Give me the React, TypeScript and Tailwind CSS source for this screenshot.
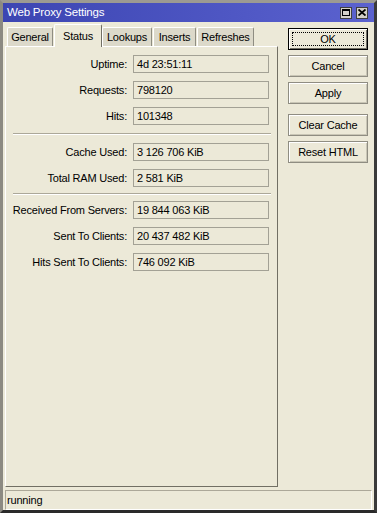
import React from 'react';

type Row = { label: string; value: string };

const groups: Row[][] = [
  [
    { label: 'Uptime:', value: '4d 23:51:11' },
    { label: 'Requests:', value: '798120' },
    { label: 'Hits:', value: '101348' },
  ],
  [
    { label: 'Cache Used:', value: '3 126 706 KiB' },
    { label: 'Total RAM Used:', value: '2 581 KiB' },
  ],
  [
    { label: 'Received From Servers:', value: '19 844 063 KiB' },
    { label: 'Sent To Clients:', value: '20 437 482 KiB' },
    { label: 'Hits Sent To Clients:', value: '746 092 KiB' },
  ],
];

function Tab({ label, className, active }: { label: string; className: string; active?: boolean }) {
  if (active) {
    return (
      <div
        className={`${className} h-[23px] flex items-start justify-center pt-[3px] bg-[#ece9d8] border-l border-t border-white border-r border-r-[#716f64] rounded-t-[2px] relative z-10`}
      >
        {label}
      </div>
    );
  }
  return (
    <div
      className={`${className} h-[19px] mb-[1px] flex items-center justify-center bg-[#dcd9ca] border-l border-t border-white border-r border-r-[#8f8d82] rounded-t-[2px]`}
    >
      {label}
    </div>
  );
}

function Button({ label, focused }: { label: string; focused?: boolean }) {
  if (focused) {
    return (
      <div className="h-[22px] w-[80px] border border-black bg-[#ece9d8] p-[3px] shadow-[inset_1px_1px_0_#fff,inset_-1px_-1px_0_#716f64]">
        <div className="h-full w-full border border-dotted border-black flex items-center justify-center">
          {label}
        </div>
      </div>
    );
  }
  return (
    <div className="h-[22px] w-[80px] border border-[#8f8d82] bg-[#ece9d8] flex items-center justify-center shadow-[inset_1px_1px_0_#fff,inset_-1px_-1px_0_#c9c6b6]">
      {label}
    </div>
  );
}

function Separator() {
  return <div className="ml-[7px] w-[258px] h-[2px] border-t border-[#aca899] border-b border-b-white" />;
}

export default function App() {
  return (
    <div className="w-[380px] h-[520px] bg-white font-['Liberation_Sans',Arial,sans-serif] text-[11px] tracking-[-0.2px] text-black">
      <div className="w-[377px] h-[513px] flex flex-col bg-[#ece9d8] border-[3px] border-l-[#8c8a82] border-t-[#9c9a92] border-r-[#3a3a3a] border-b-[#2a2a2a]">
        {/* title bar */}
        <div className="h-[19px] flex items-center pl-[4px] pr-[6px] bg-gradient-to-r from-[#3c45b2] to-[#5b62cf] text-white text-[11.5px]">
          <span className="flex-1">Web Proxy Settings</span>
          <div className="w-[12px] h-[12px] bg-[#d4d0c8] border border-[#404040] flex items-center justify-center">
            <div className="w-[8px] h-[7px] border border-black border-t-2" />
          </div>
          <div className="ml-[4px] w-[12px] h-[12px] bg-[#d4d0c8] border border-[#404040] flex items-center justify-center">
            <svg width="8" height="7" viewBox="0 0 8 7">
              <path d="M0.5 0.5 L7.5 6.5 M7.5 0.5 L0.5 6.5" stroke="black" strokeWidth="1.8" />
            </svg>
          </div>
        </div>

        <div className="flex h-[465px]">
          {/* tabs + panel */}
          <div className="ml-[2px] w-[273px] flex flex-col">
            <div className="h-[25px] flex items-end -mb-[1px]">
              <Tab label="General" className="ml-[2px] w-[46px]" />
              <Tab label="Status" className="ml-[1px] w-[48px]" active />
              <Tab label="Lookups" className="w-[50px]" />
              <Tab label="Inserts" className="ml-[1px] w-[43px]" />
              <Tab label="Refreshes" className="ml-[1px] w-[57px]" />
            </div>
            <div className="h-[441px] border-l border-t border-white border-r border-b border-r-[#716f64] border-b-[#716f64] pt-[8px] flex flex-col">
              {groups.map((group, gi) => (
                <React.Fragment key={gi}>
                  {gi === 1 && (
                    <div className="mt-[8px] mb-[8px]">
                      <Separator />
                    </div>
                  )}
                  {gi === 2 && (
                    <div className="mt-[6px] mb-[6px]">
                      <Separator />
                    </div>
                  )}
                  <div className="flex flex-col gap-[8px]">
                    {group.map((row) => (
                      <div key={row.label} className="flex items-center h-[18px]">
                        <div className="w-[121px] text-right whitespace-nowrap">{row.label}</div>
                        <div className="ml-[6px] w-[136px] h-[18px] border border-[#a3a195] flex items-center pl-[3px]">
                          {row.value}
                        </div>
                      </div>
                    ))}
                  </div>
                </React.Fragment>
              ))}
            </div>
          </div>

          {/* buttons */}
          <div className="ml-[10px] pt-[6px] flex flex-col gap-[5px]">
            <Button label="OK" focused />
            <Button label="Cancel" />
            <Button label="Apply" />
            <div className="mt-[5px]">
              <Button label="Clear Cache" />
            </div>
            <Button label="Reset HTML" />
          </div>
        </div>

        {/* status bar */}
        <div className="mt-[3px] ml-[2px] mr-[2px] h-[20px] border-t border-l border-[#aca899] border-b border-r border-b-white border-r-white flex items-center pl-[1px]">
          running
        </div>
      </div>
    </div>
  );
}
